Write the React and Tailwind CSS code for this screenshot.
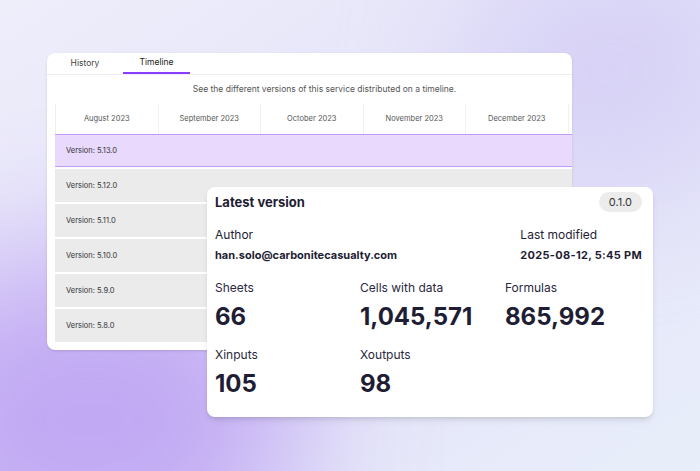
const months = ['August 2023', 'September 2023', 'October 2023', 'November 2023', 'December 2023'];
const versions = ['5.13.0', '5.12.0', '5.11.0', '5.10.0', '5.9.0', '5.8.0'];

const Stat = ({ label, value }) => (
  <div>
    <div className="text-[12px] text-[#2a2840]">{label}</div>
    <div className="text-[24px] font-bold leading-none mt-[8px] text-[#1f1d33]">{value}</div>
  </div>
);

export default function App() {
  return (
    <div
      className="relative w-[700px] h-[471px] overflow-hidden bg-gradient-to-br from-[#eeeefb] via-[#e4e2f8] to-[#e8eefa]"
      style={{ fontFamily: 'Inter, "Liberation Sans", sans-serif' }}
    >
      <div className="absolute -left-[120px] top-[260px] w-[420px] h-[320px] rounded-full bg-[#b89af2] blur-[70px] opacity-80" />
      <div className="absolute right-[-60px] top-[-60px] w-[300px] h-[260px] rounded-full bg-[#d3cdf6] blur-[60px] opacity-70" />

      {/* Timeline card */}
      <div className="absolute left-[47px] top-[53px] w-[525px] h-[297px] bg-white rounded-[8px] overflow-hidden shadow-sm">
        <div className="flex h-[22px] border-b border-[#ececf2] text-[8.5px] text-[#444]">
          <div className="w-[76px] flex items-center justify-center">History</div>
          <div className="w-[67px] flex items-center justify-center border-b-2 border-[#8b3dff] text-[#222]">Timeline</div>
        </div>
        <div className="text-center text-[8.5px] text-[#555] mt-[8px] pl-[30px]">See the different versions of this service distributed on a timeline.</div>
        <div className="ml-[8px] mt-[8px]">
          <div className="flex h-[30px] border-l border-[#eee]">
            {months.map((m) => (
              <div key={m} className="w-[102.5px] shrink-0 flex items-center justify-center text-[7.5px] text-[#555] border-r border-[#f1f1f1]">{m}</div>
            ))}
          </div>
          {versions.map((v, i) => (
            <div
              key={v}
              className={
                i === 0
                  ? 'h-[33px] flex items-center pl-[11px] text-[7.5px] text-[#333] bg-[#e9d9fd] border-y border-[#c39af7]'
                  : 'h-[33px] mt-[2px] flex items-center pl-[11px] text-[7.5px] text-[#333] bg-[#ebebeb]'
              }
            >
              Version: {v}
            </div>
          ))}
        </div>
      </div>

      {/* Latest version card */}
      <div className="absolute left-[207px] top-[187px] w-[446px] h-[230px] bg-white rounded-[8px] shadow-md px-[8px] pt-[5px] text-[#1f1d33]">
        <div className="flex justify-between items-center">
          <div className="text-[13px] font-bold mt-[1px]">Latest version</div>
          <div className="text-[11px] text-[#333] bg-[#ececec] rounded-full px-[10px] h-[20px] flex items-center mr-[3px]">0.1.0</div>
        </div>
        <div className="flex justify-between mt-[13px]">
          <div>
            <div className="text-[12px]">Author</div>
            <div className="text-[11px] font-bold mt-[3px]">han.solo@carbonitecasualty.com</div>
          </div>
          <div className="mr-[3px]">
            <div className="text-[12px]">Last modified</div>
            <div className="text-[11px] font-bold mt-[3px] tracking-[0.3px]">2025-08-12, 5:45 PM</div>
          </div>
        </div>
        <div className="grid grid-cols-[145px_145px_1fr] mt-[16px] gap-y-[17px]">
          <Stat label="Sheets" value="66" />
          <Stat label="Cells with data" value="1,045,571" />
          <Stat label="Formulas" value="865,992" />
          <Stat label="Xinputs" value="105" />
          <Stat label="Xoutputs" value="98" />
        </div>
      </div>
    </div>
  );
}
